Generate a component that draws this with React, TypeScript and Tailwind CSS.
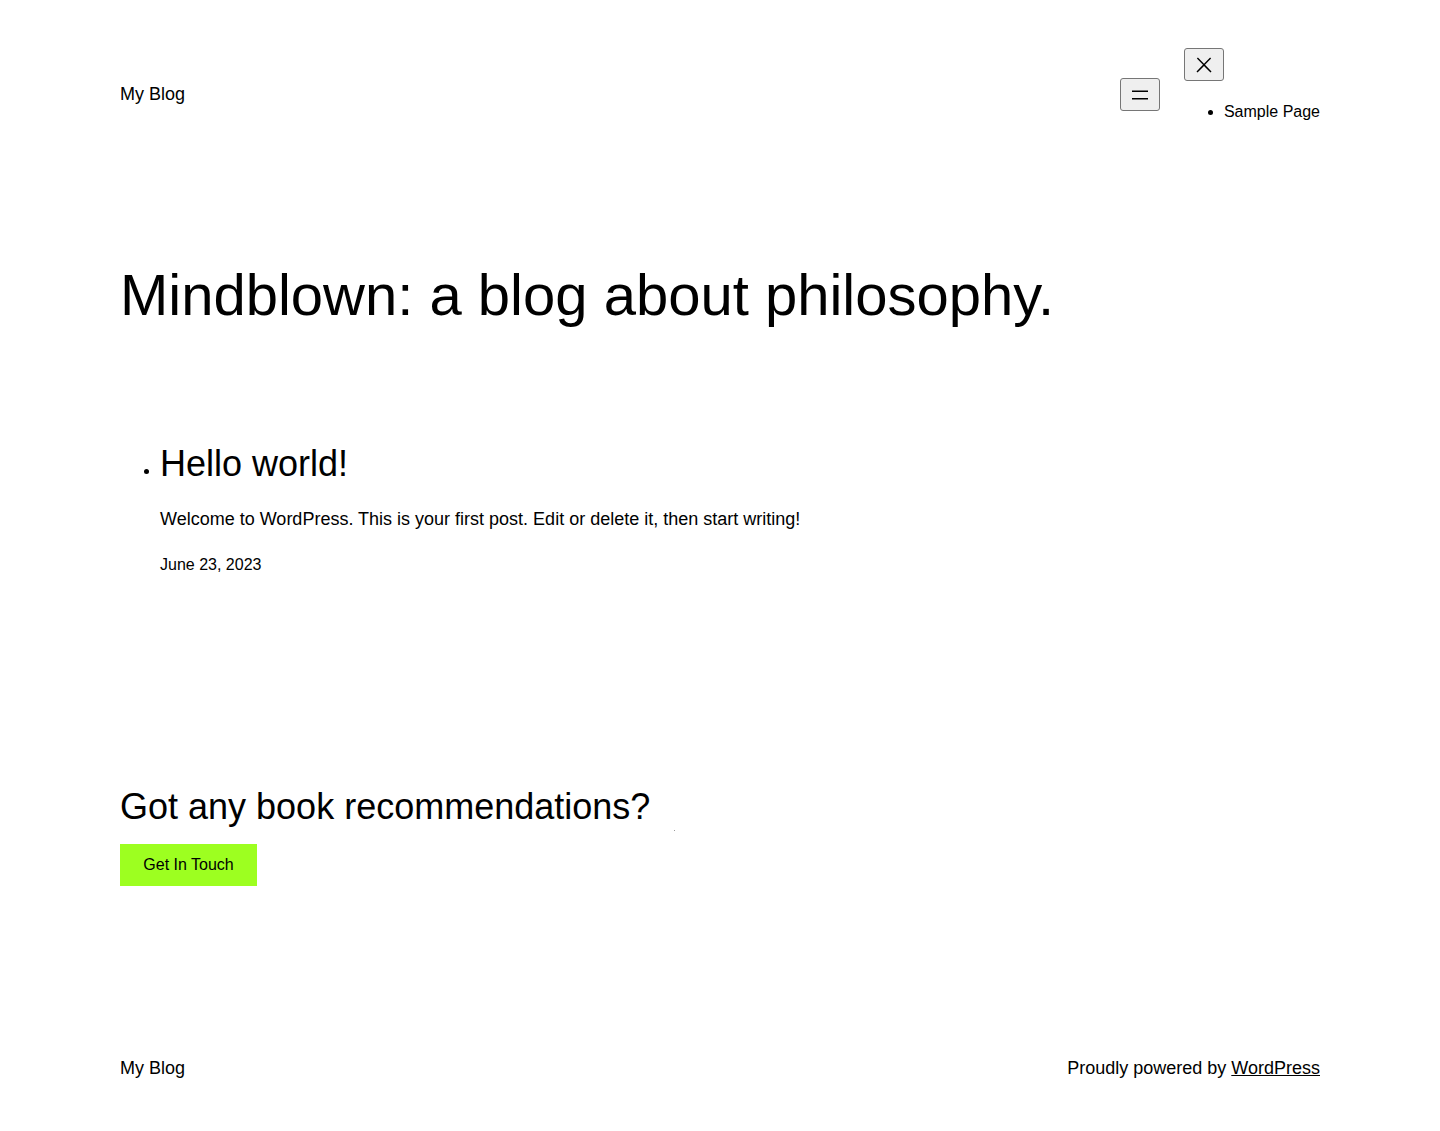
export default function App() {
  return (
    <div className="w-full min-h-screen bg-white text-black font-['Liberation_Sans',Arial,sans-serif] flex flex-col">
      <header className="flex items-center justify-between px-[120px] pt-[48px]">
        <a href="#" className="text-[18px] leading-[27px] text-black">My Blog</a>
        <nav className="flex items-center gap-[24px]">
          <button className="w-[40px] h-[33px] flex items-center justify-center bg-[#efefef] border border-[#767676] rounded-[3px]">
            <svg width="24" height="24" viewBox="0 0 24 24" fill="currentColor">
              <rect x="4" y="7.5" width="16" height="1.5" />
              <rect x="4" y="15" width="16" height="1.5" />
            </svg>
          </button>
          <div className="flex flex-col">
            <button className="w-[40px] h-[33px] flex items-center justify-center bg-[#efefef] border border-[#767676] rounded-[3px]">
              <svg width="24" height="24" viewBox="0 0 24 24" fill="currentColor">
                <path d="M13 11.8l6.1-6.3-1-1-6.1 6.2-6.1-6.2-1 1 6.1 6.3-6.5 6.7 1 1 6.5-6.6 6.5 6.6 1-1z" />
              </svg>
            </button>
            <ul className="list-disc pl-[40px] mt-[19px] mb-[17px] text-[16px] leading-[24px] whitespace-nowrap">
              <li><a href="#">Sample Page</a></li>
            </ul>
          </div>
        </nav>
      </header>

      <main className="px-[120px]">
        <h1 className="mt-[119px] text-[58px] leading-[1.2] font-normal">Mindblown: a blog about philosophy.</h1>

        <ul className="list-disc pl-[40px] mt-[112px]">
          <li>
            <h2 className="text-[36px] leading-[1.2]">Hello world!</h2>
            <p className="mt-[21px] text-[18px] leading-[27px]">Welcome to WordPress. This is your first post. Edit or delete it, then start writing!</p>
            <div className="mt-[20px] text-[16px] leading-[24px]">June 23, 2023</div>
          </li>
        </ul>

        <div className="mt-[208px] flex items-start">
          <h2 className="text-[36px] leading-[1.2]">Got any book recommendations?</h2>
          <span className="ml-[24px] mt-[45px] w-px h-px bg-[#9a9a9a]"></span>
        </div>
        <a href="#" className="mt-[13px] inline-flex items-center justify-center w-[137px] h-[42px] bg-[#9dff20] text-black text-[16px]">Get In Touch</a>
      </main>

      <footer className="flex items-center justify-between px-[120px] mt-[169px] pb-[49px] text-[18px] leading-[27px]">
        <a href="#">My Blog</a>
        <p>Proudly powered by <a href="#" className="underline">WordPress</a></p>
      </footer>
    </div>
  );
}
